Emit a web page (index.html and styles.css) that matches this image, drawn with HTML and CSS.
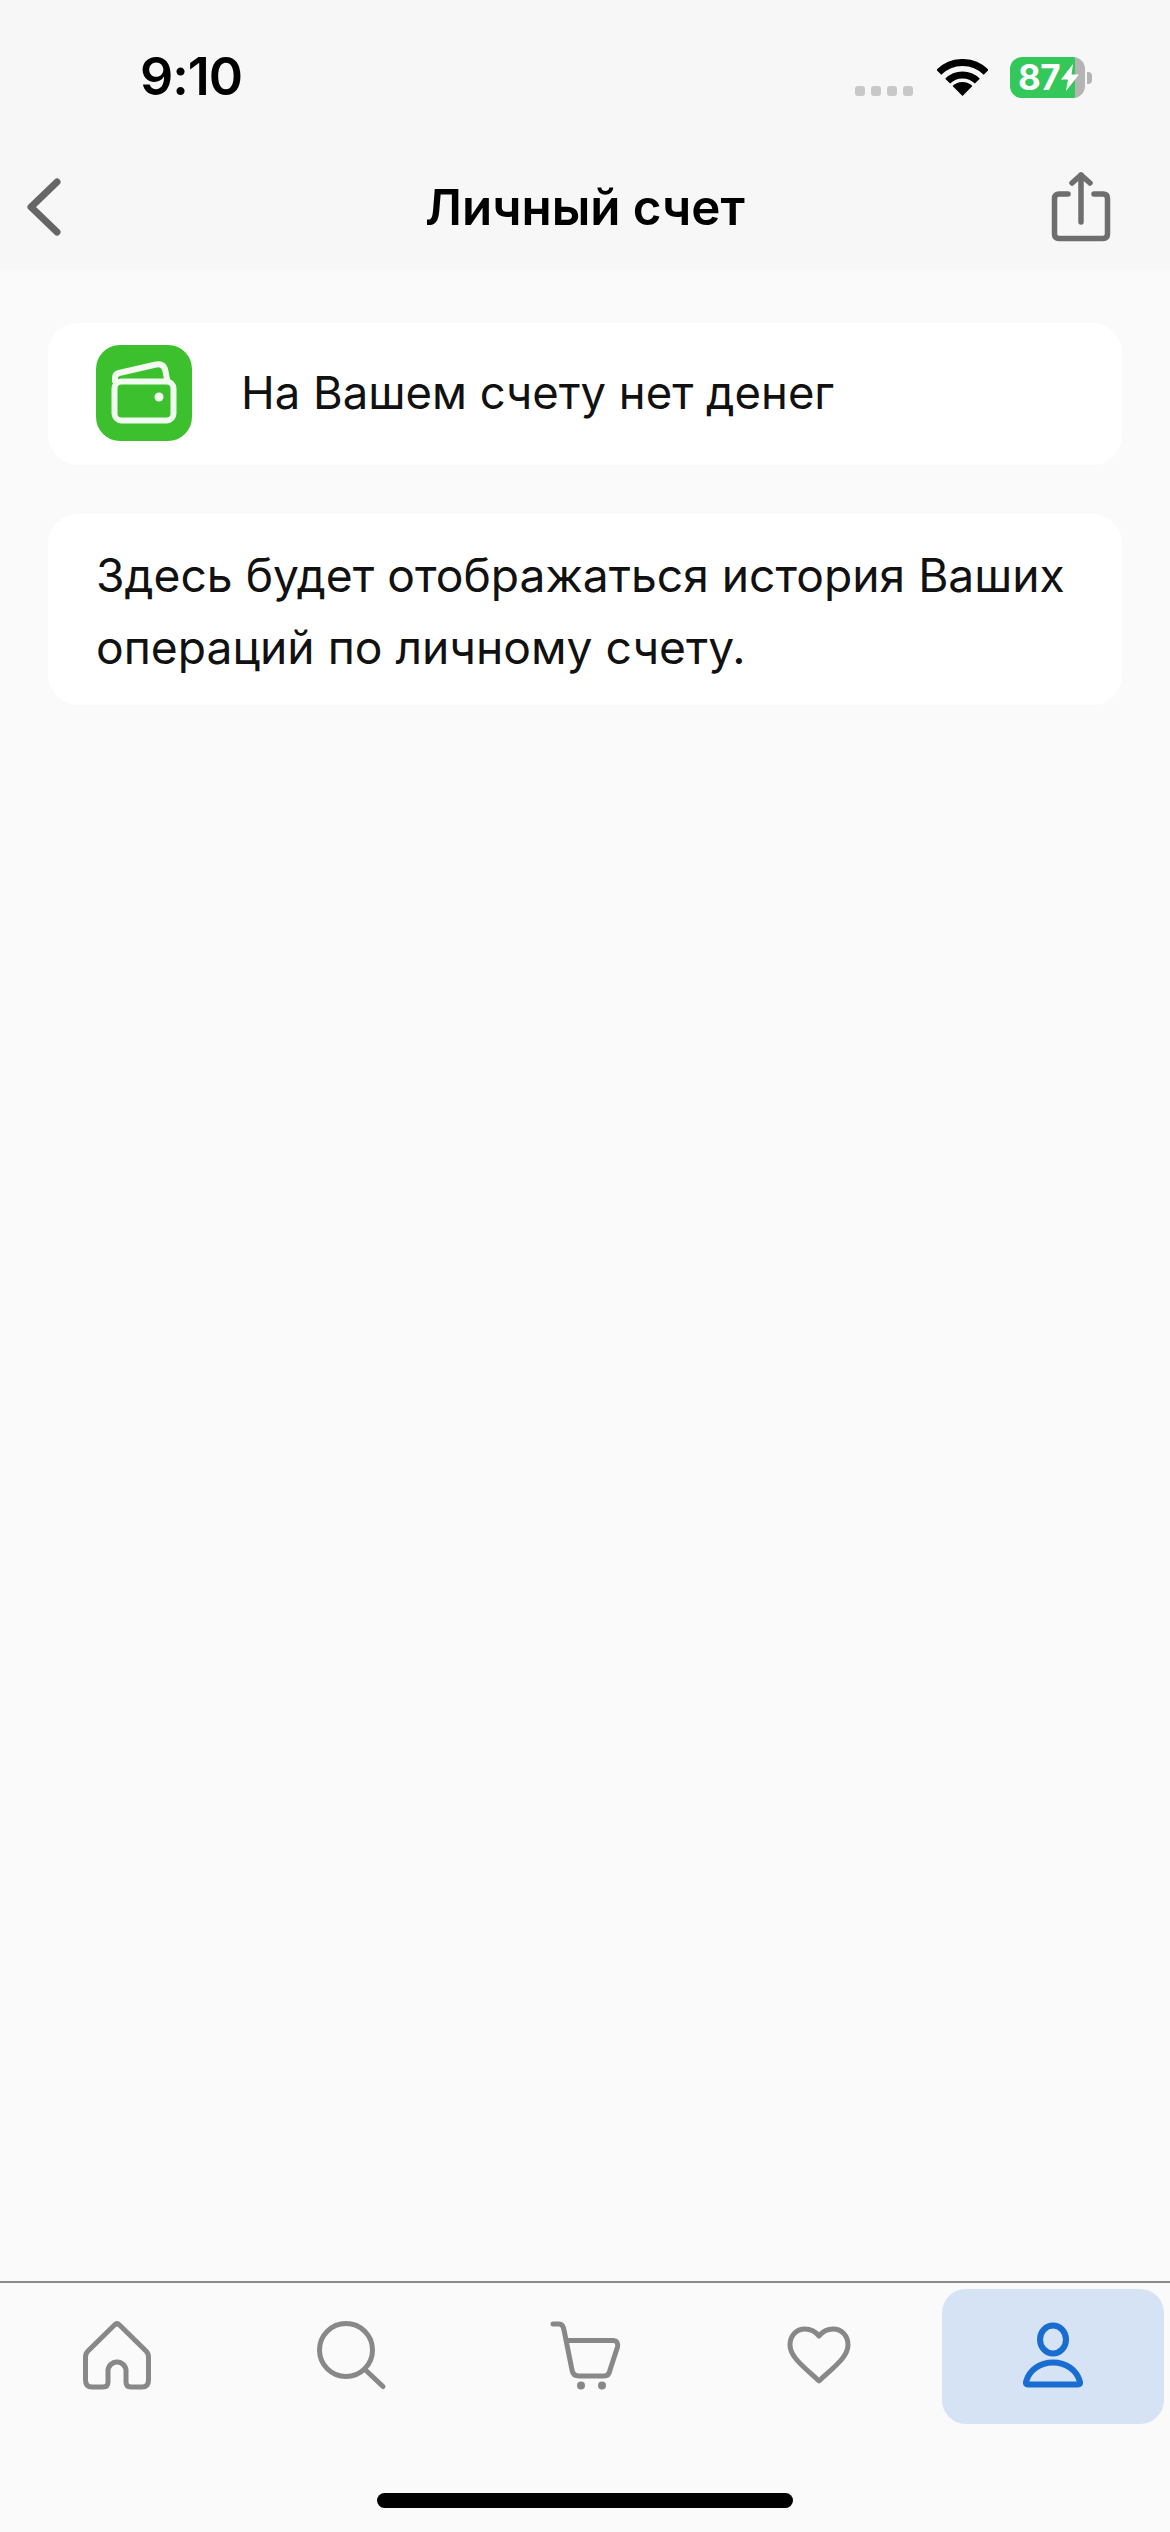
FILE: index.html
```html
<!DOCTYPE html>
<html lang="ru">
<head>
<meta charset="utf-8">
<title>Личный счет</title>
<link rel="stylesheet" href="styles.css">
</head>
<body>
<div class="app">
  <div class="top">
    <div class="status">
      <span class="time">9:10</span>
      <div class="indicators">
        <div class="dots"><i></i><i></i><i></i><i></i></div>
        <svg class="wifi" viewBox="0 0 51 37"><path class="wifi-arc" d="M1.8 13.3A33.5 33.5 0 0 1 49.2 13.3"/><path class="wifi-arc" d="M10.65 22.15A21 21 0 0 1 40.35 22.15"/><path d="M25.5 37L15.6 27.1A14 14 0 0 1 35.4 27.1Z"/></svg>
        <div class="battery">
          <div class="battery-body"><span class="battery-level">87</span><svg class="bolt" viewBox="0 0 18 27"><path d="M12 0L0 15.5H7L5 27L18 10.5H10.5Z"/></svg></div>
          <div class="battery-nub"></div>
        </div>
      </div>
    </div>
    <header class="header">
      <svg class="back" viewBox="0 0 36 60"><path d="M31 5L5 30L31 55"/></svg>
      <h1 class="title">Личный счет</h1>
      <svg class="share" viewBox="0 0 64 74"><path d="M19 24H10Q5.500 24 5.500 28.500V64Q5.500 68.500 10 68.500H54Q58.500 68.500 58.500 64V28.500Q58.500 24 54 24H45"/><path d="M32 52V5"/><path d="M23 13L32 5L41 13"/></svg>
    </header>
  </div>

  <main class="content">
    <section class="card balance">
      <div class="wallet-tile">
        <svg class="wallet" viewBox="0 0 96 96"><rect x="18.500" y="36.500" width="59" height="39" rx="7"/><path d="M19 36V33Q19 29 23 28L60 19.500Q67 18 69 24L71 34"/><circle class="wallet-dot" cx="63" cy="52" r="4.500"/></svg>
      </div>
      <p class="text">На Вашем счету нет денег</p>
    </section>
    <section class="card history">
      <p class="text">Здесь будет отображаться история Ваших операций по личному счету.</p>
    </section>
  </main>

  <nav class="nav">
    <div class="tabs">
      <div class="tab">
        <svg class="nav-icon" viewBox="0 0 100 100"><path d="M47.500 18L21 44Q18.500 46.500 18.500 50V73Q18.500 80 25 80H36Q41 80 41 75V64A9 9 0 0 1 59 64V75Q59 80 64 80H75Q81.500 80 81.500 73V50Q81.500 46.500 79 44L52.500 18Q50 15.500 47.500 18Z"/></svg>
      </div>
      <div class="tab">
        <svg class="nav-icon" viewBox="0 0 100 100"><circle cx="45" cy="43" r="26.500"/><path d="M65 63.500L82 79.500"/></svg>
      </div>
      <div class="tab">
        <svg class="nav-icon" viewBox="0 0 100 100"><path d="M18 17H24Q28 17 29 23L37 63Q38 69 44 69H69Q74 69 75 63L82.500 40Q83.500 33.500 78 33.500H32"/><circle class="fill" cx="46" cy="78.500" r="4"/><circle class="fill" cx="67" cy="78.500" r="4"/></svg>
      </div>
      <div class="tab">
        <svg class="nav-icon" viewBox="0 0 100 100"><path d="M50 29C46 24 41 22 36 22C27 22 21 29 21 38C21 50 35 60 50 74C65 60 79 50 79 38C79 29 73 22 64 22C59 22 54 24 50 29Z"/></svg>
      </div>
      <div class="tab active">
        <svg class="nav-icon" viewBox="0 0 100 100"><ellipse cx="50" cy="32.500" rx="13" ry="14"/><path d="M25 77.500H75Q77.500 77.500 77 75C74 63 63 55.500 50 55.500C37 55.500 26 63 23 75Q22.500 77.500 25 77.500Z"/></svg>
      </div>
    </div>
    <div class="home-bar"></div>
  </nav>
</div>
</body>
</html>
```

FILE: styles.css
```css
* { box-sizing: border-box; }
html, body { margin: 0; padding: 0; }
body { background: #fafafa; font-family: Inter, "Liberation Sans", Arial, sans-serif; color: #111; }

.app { display: flex; flex-direction: column; width: 1170px; height: 2532px; overflow: hidden; }

.top { background: #f7f7f7; }

.status { display: flex; justify-content: space-between; align-items: flex-start; height: 144px; padding: 57px 78px 0 140px; }
.time { font-family: Inter, sans-serif; font-weight: 600; font-size: 52px; line-height: 40px; letter-spacing: -1px; color: #000; }
.indicators { display: flex; gap: 22px; height: 41px; }
.dots { display: flex; gap: 6px; align-self: flex-end; margin-bottom: 2px; margin-right: 2px; }
.dots i { display: block; width: 10px; height: 10px; border-radius: 3px; background: #c8c8c8; }
.wifi { display: block; width: 51px; height: 37px; align-self: flex-end; margin-bottom: 2px; fill: #000; }
.wifi-arc { fill: none; stroke: #000; stroke-width: 7; }
.battery { display: flex; align-items: center; gap: 2px; }
.battery-body { display: flex; align-items: center; width: 75px; height: 41px; padding-left: 8px; border-radius: 12px; background: linear-gradient(90deg, #34c759 87%, #b4b4b4 87%); }
.battery-level { font-family: Inter, sans-serif; font-weight: 700; font-size: 35px; line-height: 41px; letter-spacing: -0.5px; color: #fff; }
.bolt { display: block; width: 18px; height: 27px; margin-left: 1px; fill: #fff; }
.battery-nub { width: 5px; height: 12px; border-radius: 0 4px 4px 0; background: #b4b4b4; }

.header { display: grid; grid-template-columns: 1fr auto 1fr; align-items: center; height: 126px; padding: 0 26px; }
.back { display: block; width: 36px; height: 60px; fill: none; stroke: #666; stroke-width: 7; stroke-linecap: round; stroke-linejoin: round; }
.title { margin: 0; font-family: Inter, sans-serif; font-weight: 600; font-size: 49.300px; line-height: 56px; color: #000; white-space: nowrap; }
.share { display: block; justify-self: end; width: 64px; height: 74px; margin-right: 31px; fill: none; stroke: #6e6e6e; stroke-width: 5.500; stroke-linecap: round; stroke-linejoin: round; }

.content { flex: 1; display: flex; flex-direction: column; gap: 49px; padding: 53px 48px 0; }
.card { background: #fff; border-radius: 30px; }
.balance { display: flex; align-items: center; gap: 49px; height: 142px; padding: 0 48px 2px; }
.history { padding: 25px 48px 22px; }
.text { margin: 0; font-size: 46.200px; line-height: 72px; color: #111; }
.balance .text { font-size: 45.400px; }

.wallet-tile { flex: none; width: 96px; height: 96px; border-radius: 24px; background: #3dc02e; }
.wallet { display: block; width: 96px; height: 96px; fill: none; stroke: #f2fbf0; stroke-width: 6; stroke-linecap: round; stroke-linejoin: round; }
.wallet-dot { fill: #f2fbf0; stroke: none; }

.nav { border-top: 2px solid #8a8a8a; background: #fafafa; padding-top: 6px; }
.tabs { display: flex; padding: 0; }
.tab { flex: 1; display: flex; justify-content: center; align-items: center; height: 135px; margin: 0 6px; border-radius: 24px; }
.tab.active { background: #d5e3f4; }
.nav-icon { display: block; width: 100px; height: 100px; fill: none; stroke: #888; stroke-width: 5; stroke-linecap: round; stroke-linejoin: round; }
.nav-icon .fill { fill: #888; stroke: none; }
.active .nav-icon { stroke: #1a6dd0; stroke-width: 6; }
.home-bar { width: 416px; height: 15px; margin: 69px auto 24px; border-radius: 8px; background: #000; }
```
